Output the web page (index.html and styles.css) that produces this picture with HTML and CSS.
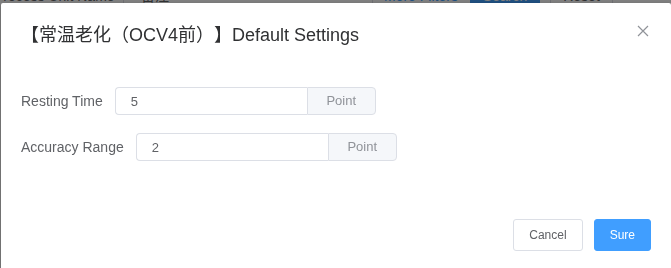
FILE: index.html
```html
<!DOCTYPE html>
<html lang="en">
<head>
    <meta charset="UTF-8">
    <title>Default Settings</title>
    <link rel="stylesheet" href="styles.css">
</head>
<body>

    <div class="toolbar">
        <span class="tb-label">Process Unit Name</span>
        <span class="tb-input">备注</span>
        <span class="tb-more">More Filters ∨</span>
        <span class="tb-search">Search</span>
        <span class="tb-reset">Reset</span>
    </div>

    <div class="mask"></div>

    <div class="dialog">
        <div class="dialog-header">
            <span class="dialog-title">【常温老化（OCV4前）】Default Settings</span>
            <button class="close-btn" aria-label="Close">
                <svg width="12" height="12" viewBox="0 0 12 12">
                    <path d="M1 1 L11 11 M11 1 L1 11" stroke="#909399" stroke-width="1.2" fill="none"/>
                </svg>
            </button>
        </div>

        <div class="dialog-body">
            <div class="form-item">
                <label class="form-label">Resting Time</label>
                <div class="input-group">
                    <input type="text" class="input" value="5">
                    <span class="append">Point</span>
                </div>
            </div>
            <div class="form-item">
                <label class="form-label">Accuracy Range</label>
                <div class="input-group">
                    <input type="text" class="input" value="2">
                    <span class="append">Point</span>
                </div>
            </div>
        </div>

        <div class="dialog-footer">
            <button class="btn">Cancel</button>
            <button class="btn btn-primary">Sure</button>
        </div>
    </div>

</body>
</html>
```

FILE: styles.css
```css
body {
    margin: 0;
    font-family: "Liberation Sans", Arial, "Noto Sans CJK SC", sans-serif;
    background: #fff;
    overflow: hidden;
}
.toolbar {
    display: flex;
    align-items: center;
    height: 22px;
    margin-top: -15px;
    font-size: 14px;
    color: #606266;
}
.toolbar span {
    box-sizing: border-box;
    height: 22px;
    line-height: 22px;
}
.tb-label {
    margin-left: -6px;
    width: 129px;
}
.tb-input {
    width: 249px;
    padding-left: 17px;
    border-left: 1px solid #dcdfe6;
}
.tb-more {
    width: 98px;
    padding-left: 11px;
    border-left: 1px solid #dcdfe6;
    color: #409eff;
}
.tb-search {
    width: 70px;
    background: #409eff;
    color: #fff;
    text-align: center;
}
.tb-reset {
    width: 63px;
    margin-left: 10px;
    text-align: center;
    border-left: 1px solid #dcdfe6;
    border-right: 1px solid #dcdfe6;
}
.mask {
    position: fixed;
    inset: 0;
    background: rgba(0, 0, 0, 0.5);
}
.dialog {
    position: absolute;
    top: 3px;
    left: 1px;
    width: 670px;
    background: #fff;
    border-radius: 2px;
    box-shadow: 0 1px 3px rgba(0, 0, 0, 0.3);
}
.dialog-header {
    position: relative;
    padding: 20px 20px 10px;
}
.dialog-title {
    font-size: 18px;
    line-height: 24px;
    color: #303133;
    text-spacing-trim: space-all;
}
.close-btn {
    position: absolute;
    top: 22px;
    right: 22px;
    padding: 0;
    border: none;
    background: none;
    width: 12px;
    height: 12px;
    cursor: pointer;
}
.close-btn svg {
    display: block;
}
.dialog-body {
    padding: 30px 20px;
}
.form-item {
    display: flex;
    align-items: center;
    height: 28px;
    margin-bottom: 18px;
}
.form-label {
    font-size: 14px;
    color: #606266;
    padding-right: 12px;
}
.input-group {
    display: flex;
    width: 261px;
    height: 28px;
}
.input {
    flex: 1;
    min-width: 0;
    box-sizing: border-box;
    height: 28px;
    padding: 0 15px;
    font-family: inherit;
    font-size: 13px;
    color: #606266;
    border: 1px solid #dcdfe6;
    border-right: none;
    border-radius: 4px 0 0 4px;
    outline: none;
}
.append {
    box-sizing: border-box;
    width: 69px;
    height: 28px;
    line-height: 26px;
    text-align: center;
    font-size: 13px;
    color: #909399;
    background: #f5f7fa;
    border: 1px solid #dcdfe6;
    border-radius: 0 4px 4px 0;
}
.dialog-footer {
    display: flex;
    justify-content: flex-end;
    gap: 11px;
    padding: 10px 20px 20px;
}
.btn {
    font-family: inherit;
    font-size: 12px;
    line-height: 12px;
    padding: 9px 15px;
    border: 1px solid #dcdfe6;
    border-radius: 3px;
    background: #fff;
    color: #606266;
    cursor: pointer;
}
.btn-primary {
    background: #409eff;
    border-color: #409eff;
    color: #fff;
}
```
